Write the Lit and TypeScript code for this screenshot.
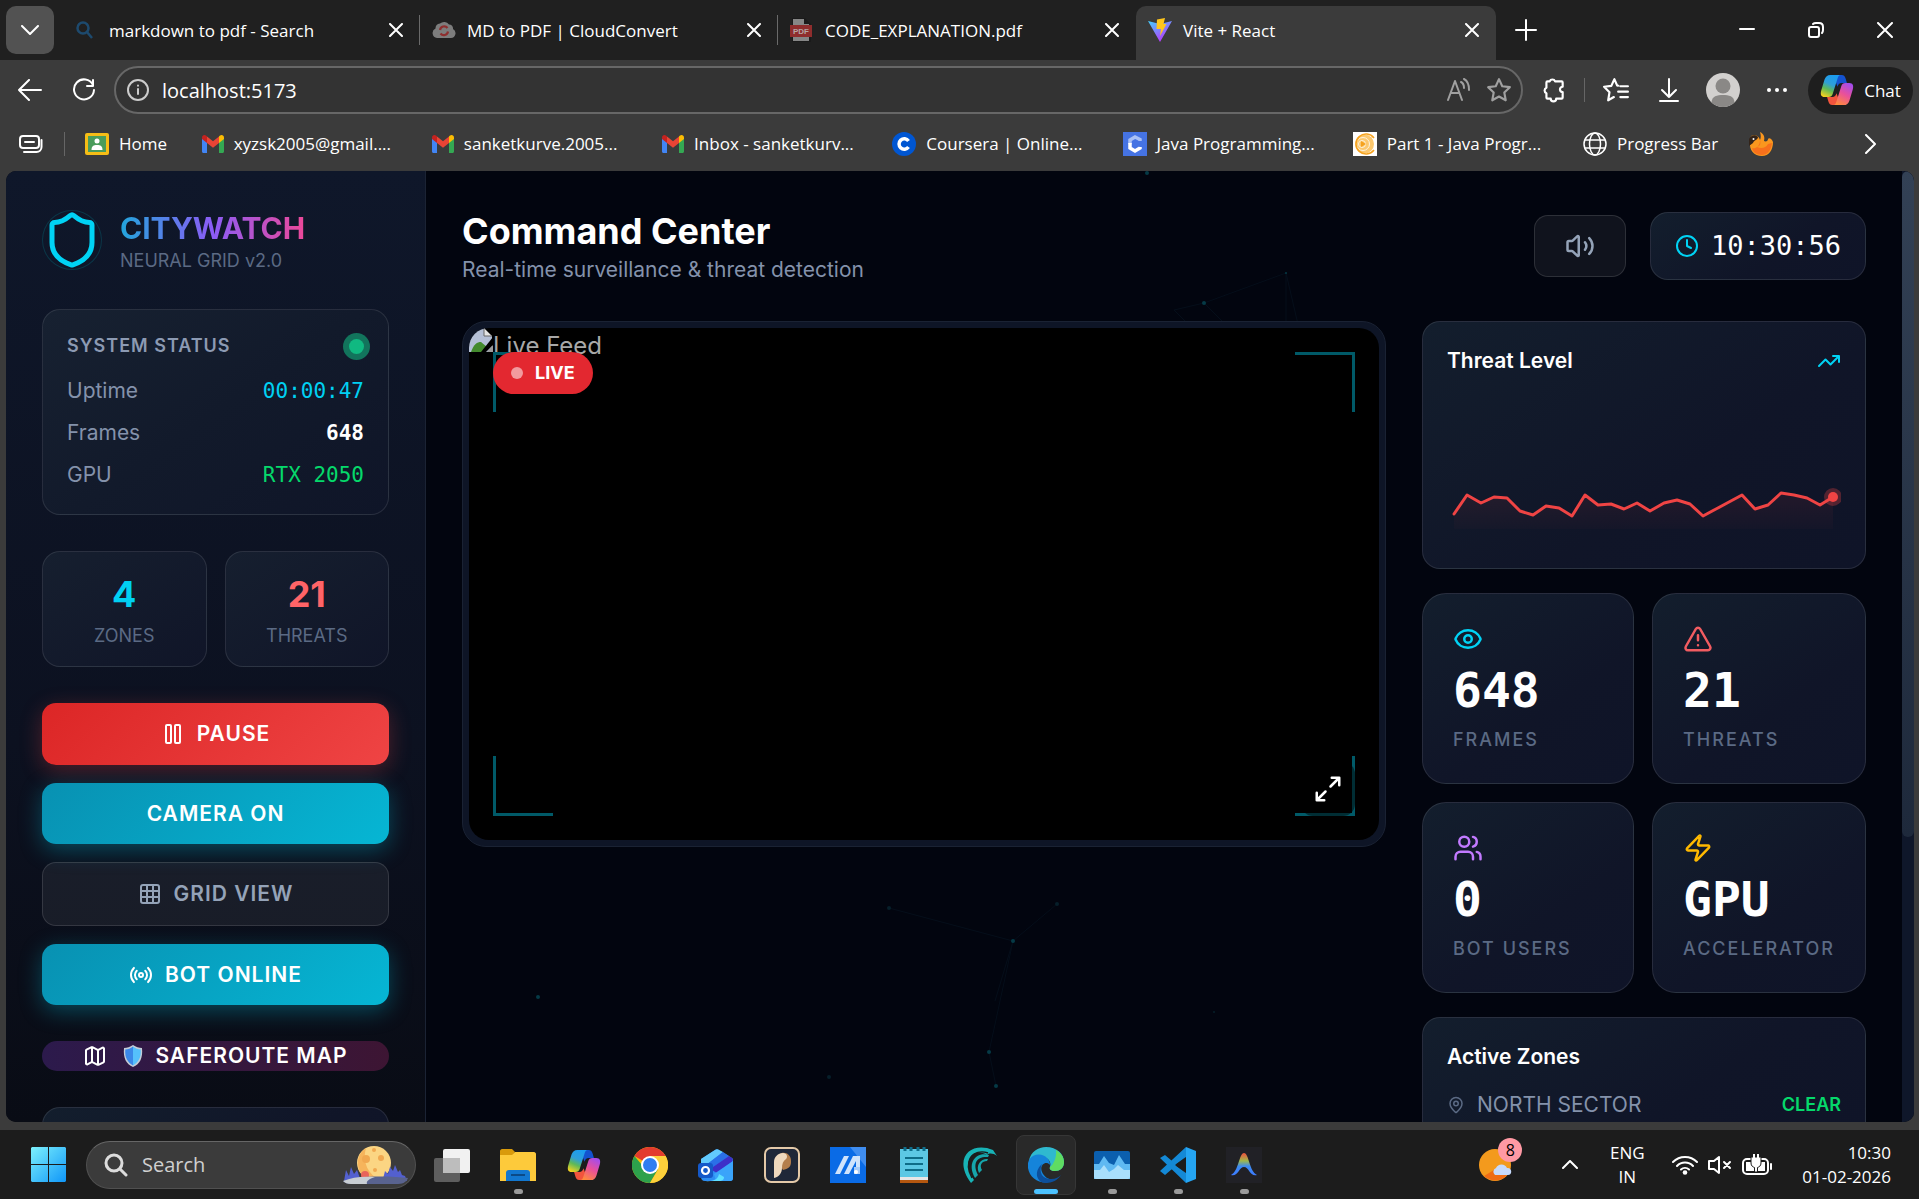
import { LitElement, html, css, svg } from "lit";
import { customElement } from "lit/decorators.js";

const copilotIcon = (size: number) => html`
    <svg width=${size} height=${size} viewBox="0 0 36 36" aria-hidden="true">
        <defs>
            <linearGradient id="copA" x1="0.6" y1="0" x2="0.2" y2="1">
                <stop offset="0" stop-color="#1b9cf0"></stop>
                <stop offset="0.4" stop-color="#2f9fd8"></stop>
                <stop offset="0.65" stop-color="#5fb957"></stop>
                <stop offset="1" stop-color="#fbd31e"></stop>
            </linearGradient>
            <linearGradient id="copB" x1="0.8" y1="0" x2="0.3" y2="1">
                <stop offset="0" stop-color="#a04cf0"></stop>
                <stop offset="0.5" stop-color="#e9509a"></stop>
                <stop offset="1" stop-color="#ff8a3d"></stop>
            </linearGradient>
        </defs>
        <path d="M14 2h9c2.500 0 3.500 1.500 4.200 4l1.300 4.500h-5.500c-2.500 0-3.800 1.500-4.500 4z" fill="#1452cf"></path>
        <path d="M22 34h-9c-2.500 0-3.500-1.500-4.200-4l-1.300-4.500h5.500c2.500 0 3.800-1.500 4.500-4z" fill="#f2543d"></path>
        <path d="M11 2h11c-2 0-2.800 1.500-3.500 4l-5 16c-.8 2.500-2 3.500-4.500 3.500h-4c-4 0-4.800-3-3.700-7l3.500-11.500c1-3.300 3-5 6.200-5z" fill="url(#copA)"></path>
        <path d="M25 34h-11c2 0 2.800-1.500 3.500-4l5-16c.8-2.500 2-3.500 4.500-3.500h4c4 0 4.800 3 3.700 7l-3.500 11.500c-1 3.300-3 5-6.200 5z" fill="url(#copB)"></path>
    </svg>
`;

const gmailIcon = html`
    <svg width="22" height="18" viewBox="0 0 22 18" aria-hidden="true">
        <path d="M0 3v13.500c0 .8.600 1.500 1.500 1.500H5V7z" fill="#4285f4"></path>
        <path d="M22 3v13.500c0 .8-.6 1.500-1.500 1.500H17V7z" fill="#34a853"></path>
        <path d="M17 1.500V8l5-4V2.500C22 .2 19.400-.8 17.700.8z" fill="#fbbc04"></path>
        <path d="M5 8V1.500l6 4.700 6-4.700V8l-6 4.700z" fill="#ea4335"></path>
        <path d="M0 2.500V4l5 4V1.500L4.300.8C2.600-.8 0 .2 0 2.500z" fill="#c5221f"></path>
    </svg>
`;

@customElement("browser-bar")
class BrowserBar extends LitElement {
    static styles = css`
        :host {
            display: block;
            flex: none;
            background: #3b3b3b;
            color: #fff;
            font-family: "Open Sans", "Noto Sans", sans-serif;
            font-size: 17px;
        }

        button {
            display: flex;
            align-items: center;
            justify-content: center;
            padding: 0;
            border: 0;
            background: none;
            color: inherit;
            font: inherit;
            flex: none;
        }

        svg {
            flex: none;
        }

        .line {
            fill: none;
            stroke: currentColor;
            stroke-width: 2;
            stroke-linecap: round;
            stroke-linejoin: round;
        }

        .tabs {
            display: flex;
            height: 60px;
            background: #202020;
        }

        .list {
            width: 48px;
            height: 48px;
            margin: 6px 8px 0 6px;
            border-radius: 10px;
            background: #525252;
        }

        .tab {
            display: flex;
            align-items: center;
            flex: 0 1 358px;
            height: 60px;
            box-sizing: border-box;
            padding: 0 12px;
        }

        .tab.line-after {
            background: linear-gradient(#6a6a6a, #6a6a6a) right 15px / 1px 30px no-repeat;
        }

        .tab.active {
            flex-basis: 360px;
            height: 54px;
            margin-top: 6px;
            padding: 0 12px 6px;
            border-radius: 10px 10px 0 0;
            background: #3b3b3b;
        }

        .name {
            flex: 1;
            justify-content: flex-start;
            gap: 11px;
            min-width: 0;
            white-space: nowrap;
        }

        .name svg {
            width: 24px;
            height: 24px;
        }

        .close {
            width: 24px;
            height: 24px;
        }

        .plus {
            width: 60px;
            height: 60px;
        }

        .window {
            display: flex;
            margin-left: auto;
        }

        .window button {
            width: 69px;
            height: 60px;
        }

        .tools {
            display: flex;
            align-items: center;
            height: 60px;
            padding-right: 6px;
        }

        .tools > button {
            width: 54px;
            height: 48px;
        }

        .tools > .first {
            margin-left: 3px;
        }

        .url {
            display: flex;
            align-items: center;
            flex: 1;
            height: 48px;
            box-sizing: border-box;
            margin-left: 3px;
            padding: 0 2px 0 11px;
            border: 2px solid #676767;
            border-radius: 24px;
            background: #333;
        }

        .url input {
            flex: 1;
            min-width: 0;
            margin-left: 13px;
            padding: 0;
            border: 0;
            outline: 0;
            background: none;
            color: #fff;
            font: inherit;
            font-size: 20px;
        }

        .url button {
            width: 41px;
            color: #a0a0a0;
        }

        .split {
            width: 1px;
            height: 24px;
            background: #666;
        }

        .tools .ext {
            width: 61px;
        }

        .tools .fav {
            width: 57px;
            padding-left: 4px;
        }

        .tools .pill {
            gap: 10px;
            width: 105px;
            height: 47px;
            margin-left: 4px;
            border-radius: 24px;
            background: #1e1e1e;
        }

        .marks {
            display: flex;
            align-items: center;
            box-sizing: border-box;
            height: 51px;
            padding-bottom: 4px;
        }

        .marks .all {
            width: 61px;
            height: 42px;
            margin-right: 3px;
        }

        .mark {
            display: flex;
            align-items: center;
            gap: 10px;
            flex: 0 1 211px;
            margin-left: 20px;
            color: #fff;
            text-decoration: none;
            white-space: nowrap;
        }

        .mark.short {
            flex-basis: 97px;
        }

        .mark.mid {
            flex-basis: 147px;
        }

        .more {
            width: 48px;
            height: 42px;
            margin: 0 25px 0 auto;
        }
    `;

    private tab(icon: unknown, text: string, cls: string) {
        return html`
            <div class="tab ${cls}">
                <button class="name">${icon}<span>${text}</span></button>
                <button class="close" aria-label="Close tab">
                    <svg width="14" height="14" viewBox="0 0 14 14"><path class="line" d="M1 1l12 12M13 1L1 13"></path></svg>
                </button>
            </div>
        `;
    }

    private mark(icon: unknown, text: string, cls = "") {
        return html`<a class="mark ${cls}" href="#" aria-label=${text || "Bookmark"}>${icon}${text}</a>`;
    }

    render() {
        const search = html`<svg viewBox="0 0 24 24"><g fill="none" stroke="#1d4a6e" stroke-width="2.500"><circle cx="9" cy="10" r="5.500"></circle><path d="M13 14l5 6"></path></g></svg>`;
        const cloud = html`
            <svg viewBox="0 0 24 24">
                <path d="M5 20a5 5 0 0 1-1.500-9.500A5 5 0 0 1 8 5.500a6 6 0 0 1 9 1 4 4 0 0 1 4 4.500A4.800 4.800 0 0 1 19 20z" fill="#7d7d7d"></path>
                <path d="M8 12a4.200 4.200 0 0 1 7.500-2M16 13.500a4.200 4.200 0 0 1-7.500 2" fill="none" stroke="#8e2f2f" stroke-width="2.200"></path>
            </svg>`;
        const pdf = html`
            <svg viewBox="0 0 24 24">
                <path d="M2 0h13l6 6v18H2z" fill="#1a1a1a"></path>
                <path d="M3 1h11v5h5v17H3z" fill="#868686"></path>
                <rect x="0" y="7" width="22" height="12" fill="#8f2d2d"></rect>
                <text x="11" y="16" text-anchor="middle" font-size="8" font-weight="700" font-family="Liberation Sans, sans-serif" fill="#b5a5a5">PDF</text>
            </svg>`;
        const vite = html`
            <svg viewBox="0 0 24 24">
                <defs><linearGradient id="vt" x1="0" y1="0" x2="0.600" y2="1"><stop offset="0" stop-color="#41d1ff"></stop><stop offset="1" stop-color="#bd34fe"></stop></linearGradient></defs>
                <path d="M0 3l12 3 12-3-12 21z" fill="url(#vt)"></path>
                <path d="M9 1.500l8-1.500-1.500 6h3L12 18l1-7H8.500z" fill="#ffc61c"></path>
            </svg>`;
        const home = html`
            <svg width="24" height="22" viewBox="0 0 24 22">
                <rect width="24" height="22" rx="2" fill="#f6bd16"></rect>
                <rect x="3" y="3" width="18" height="16" fill="#4a9c5b"></rect>
                <circle cx="12" cy="8" r="2.500" fill="#fff"></circle>
                <path d="M6.500 17c0-4 2-5 5.500-5s5.500 1 5.500 5z" fill="#fff"></path>
            </svg>`;
        const coursera = html`<svg width="24" height="24" viewBox="0 0 24 24"><circle cx="12" cy="12" r="12" fill="#0056d2"></circle><path d="M16.500 9a5.200 5.200 0 1 0 0 6" fill="none" stroke="#fff" stroke-width="3.500"></path></svg>`;
        const java = html`<svg width="24" height="24" viewBox="0 0 24 24"><rect width="24" height="24" fill="#4573e3"></rect><path d="M17 9V7.500L12 5 7 8v4" fill="none" stroke="#a9c0f5" stroke-width="3.500"></path><path d="M7 11v5l5 3 5-3v-1" fill="none" stroke="#fff" stroke-width="3.500"></path></svg>`;
        const part = html`
            <svg width="24" height="24" viewBox="0 0 24 24">
                <rect width="24" height="24" fill="#fff"></rect>
                <circle cx="11.500" cy="12" r="9.500" fill="#fcc86e"></circle>
                <g fill="none" stroke="#fff3dc"><circle cx="10" cy="12" r="6.500"></circle><circle cx="9" cy="12" r="3.500"></circle></g>
                <path d="M21 6a10 10 0 1 0 0 12" fill="none" stroke="#f6a21e" stroke-width="1.500"></path>
                <path d="M8 9l5 3-5 3z" fill="#f6a21e"></path>
            </svg>`;
        const globe = html`<svg width="24" height="24" viewBox="0 0 24 24" fill="none" stroke="#fff" stroke-width="1.500"><circle cx="12" cy="12" r="11"></circle><ellipse cx="12" cy="12" rx="5.500" ry="11"></ellipse><path d="M2 8h20M2 16h20"></path></svg>`;
        const flame = html`
            <svg width="24" height="24" viewBox="0 0 24 24">
                <path d="M2 4c4-2 8 0 9 4 1-2 1-5 0-8 4 2 5 5 4 9 2 1 4 0 4-2 1-2 4 0 5 3 0 8-4 14-11 14C5 24 0 18 1 10z" fill="#fa971e"></path>
                <path d="M11 8c1 4 0 6-3 7 4 2 9 1 11-3l4-1c-1 8-5 12-10 12-6 0-9-3-10-7 3 1 8-1 8-8z" fill="#f7701c"></path>
                <path d="M0 7c2-4 6-5 9-2 0 3-4 3-5 6l-4 3z" fill="#33241a"></path>
                <circle cx="4.500" cy="7" r="1" fill="#fff"></circle>
            </svg>`;

        return html`
            <div class="tabs">
                <button class="list" aria-label="Search tabs">
                    <svg width="18" height="10" viewBox="0 0 18 10"><path class="line" d="M1 1l8 8 8-8"></path></svg>
                </button>
                ${this.tab(search, "markdown to pdf - Search", "line-after")}
                ${this.tab(cloud, "MD to PDF | CloudConvert", "line-after")}
                ${this.tab(pdf, "CODE_EXPLANATION.pdf", "")}
                ${this.tab(vite, "Vite + React", "active")}
                <button class="plus" aria-label="New tab">
                    <svg width="22" height="22" viewBox="0 0 22 22"><path class="line" d="M11 1v20M1 11h20"></path></svg>
                </button>
                <div class="window">
                    <button aria-label="Minimize"><svg width="16" height="16" viewBox="0 0 16 16"><path class="line" d="M1 7h14"></path></svg></button>
                    <button aria-label="Restore"><svg width="16" height="16" viewBox="0 0 16 16"><g class="line"><rect x="1" y="5" width="10" height="10" rx="2"></rect><path d="M5 2c1-1 1-1 3-1h3c3 0 4 1 4 4v3c0 2 0 2-1 3"></path></g></svg></button>
                    <button aria-label="Close"><svg width="16" height="16" viewBox="0 0 16 16"><path class="line" d="M1 1l14 14M15 1L1 15"></path></svg></button>
                </div>
            </div>

            <div class="tools">
                <button class="first" aria-label="Back"><svg width="24" height="22" viewBox="0 0 24 22"><path class="line" d="M23 11H1M11 1L1 11l10 10"></path></svg></button>
                <button aria-label="Refresh"><svg width="24" height="24" viewBox="0 0 24 24"><path class="line" d="M21 7a10 10 0 1 0 1 5M21 2v6h-6"></path></svg></button>
                <div class="url">
                    <svg width="22" height="22" viewBox="0 0 22 22" fill="none" stroke="#ccc" stroke-width="2" stroke-linecap="round"><circle cx="11" cy="11" r="10"></circle><path d="M11 10v5M11 6.500v.2"></path></svg>
                    <input aria-label="Address" value="localhost:5173">
                    <button aria-label="Read aloud"><svg width="24" height="24" viewBox="0 0 24 24"><path class="line" d="M2 22L9 3l7 19M5 15h8M15 4c2 1 3 3 3 6M18 1c4 2 5 6 5 11"></path></svg></button>
                    <button aria-label="Favorite"><svg width="26" height="26" viewBox="0 0 24 24"><path class="line" d="M12 2l3 6.500 7 .9-5.100 5 1.300 7.100L12 18l-6.200 3.500 1.300-7.100L2 9.400l7-.9z"></path></svg></button>
                </div>
                <button class="ext" aria-label="Extensions"><svg width="26" height="26" viewBox="0 0 24 24"><path class="line" d="M8 4a2.700 2.700 0 0 1 5 0h6a1 1 0 0 1 1 1v4a2.500 2.500 0 1 0 0 5v5a1 1 0 0 1-1 1h-5a2.500 2.500 0 0 1-5 0H6a1 1 0 0 1-1-1v-4a2.700 2.700 0 0 1 0-5V5a1 1 0 0 1 1-1z"></path></svg></button>
                <div class="split"></div>
                <button class="fav" aria-label="Favorites"><svg width="26" height="26" viewBox="0 0 24 24"><path class="line" d="M14 8l-1-.3L10.500 2 7.700 8.200 1 9l5 5-1.200 7.500L10 18.500M16 8.500h7M14 13.500h9M16 18.500h7"></path></svg></button>
                <button aria-label="Downloads"><svg width="20" height="24" viewBox="0 0 20 24"><path class="line" d="M10 1v18M3 12l7 7 7-7M1 23h18"></path></svg></button>
                <button aria-label="Profile">
                    <svg width="34" height="34" viewBox="0 0 34 34"><circle cx="17" cy="17" r="17" fill="#d2d0ce"></circle><circle cx="17" cy="13" r="7.500" fill="#8a8886"></circle><path d="M5.500 29.500C6 23 11 22 17 22s11 1 11.500 7.500A17 17 0 0 1 5.500 29.500z" fill="#8a8886"></path></svg>
                </button>
                <button aria-label="Menu"><svg width="20" height="4" viewBox="0 0 20 4" fill="#fff"><circle cx="2" cy="2" r="2"></circle><circle cx="10" cy="2" r="2"></circle><circle cx="18" cy="2" r="2"></circle></svg></button>
                <button class="pill">${copilotIcon(34)}Chat</button>
            </div>

            <nav class="marks">
                <button class="all" aria-label="Tab groups"><svg width="24" height="18" viewBox="0 0 24 18"><g class="line"><rect x="1" y="1" width="19" height="12" rx="3"></rect><path d="M6 7h9M22.500 5v7a5 5 0 0 1-5 5H5"></path></g></svg></button>
                <div class="split"></div>
                ${this.mark(home, "Home", "short")}
                ${this.mark(gmailIcon, "xyzsk2005@gmail....")}
                ${this.mark(gmailIcon, "sanketkurve.2005...")}
                ${this.mark(gmailIcon, "Inbox - sanketkurv...")}
                ${this.mark(coursera, "Coursera | Online...")}
                ${this.mark(java, "Java Programming...")}
                ${this.mark(part, "Part 1 - Java Progr...")}
                ${this.mark(globe, "Progress Bar", "mid")}
                ${this.mark(flame, "", "short")}
                <button class="more" aria-label="More bookmarks"><svg width="11" height="20" viewBox="0 0 11 20"><path class="line" d="M1 1l9 9-9 9"></path></svg></button>
            </nav>
        `;
    }
}

// 24-unit outline icons of the dashboard
const shapes: Record<string, unknown> = {
    shield: svg`<path d="M20 13c0 5-3.500 7.500-7.660 8.950a1 1 0 0 1-.67-.01C7.500 20.500 4 18 4 13V6a1 1 0 0 1 1-1c2 0 4.500-1.200 6.240-2.720a1.170 1.170 0 0 1 1.520 0C14.510 3.810 17 5 19 5a1 1 0 0 1 1 1z"/>`,
    pause: svg`<rect x="14" y="3" width="5" height="18" rx="1"/><rect x="5" y="3" width="5" height="18" rx="1"/>`,
    grid: svg`<rect width="18" height="18" x="3" y="3" rx="2"/><path d="M3 9h18M3 15h18M9 3v18M15 3v18"/>`,
    radio: svg`<path d="M16.250 7.760a6 6 0 0 1 0 8.490M19.070 4.930a10 10 0 0 1 0 14.140M7.750 16.250a6 6 0 0 1 0-8.490M4.930 19.070a10 10 0 0 1 0-14.140"/><circle cx="12" cy="12" r="2"/>`,
    map: svg`<path d="M14.100 5.550a2 2 0 0 0 1.800 0l3.660-1.830A1 1 0 0 1 21 4.620v12.760a1 1 0 0 1-.55.9l-4.550 2.270a2 2 0 0 1-1.800 0l-4.200-2.100a2 2 0 0 0-1.800 0l-3.660 1.830A1 1 0 0 1 3 19.380V6.620a1 1 0 0 1 .55-.9l4.550-2.270a2 2 0 0 1 1.800 0zM15 5.760v15M9 3.240v15"/>`,
    volume: svg`<path d="M11 4.700a.7.700 0 0 0-1.200-.5L6.400 7.590A1.400 1.400 0 0 1 5.420 8H3a1 1 0 0 0-1 1v6a1 1 0 0 0 1 1h2.420a1.400 1.400 0 0 1 .97.41l3.390 3.380a.7.700 0 0 0 1.200-.5zM16 9a5 5 0 0 1 0 6M19.360 18.360a9 9 0 0 0 0-12.730"/>`,
    clock: svg`<circle cx="12" cy="12" r="10"/><path d="M12 6v6l4 2"/>`,
    trend: svg`<path d="M16 7h6v6M22 7l-8.500 8.500-5-5L2 17"/>`,
    eye: svg`<path d="M2.060 12.350a1 1 0 0 1 0-.7 10.750 10.750 0 0 1 19.880 0 1 1 0 0 1 0 .7 10.750 10.750 0 0 1-19.880 0"/><circle cx="12" cy="12" r="3"/>`,
    alert: svg`<path d="M21.730 18l-8-14a2 2 0 0 0-3.480 0l-8 14A2 2 0 0 0 4 21h16a2 2 0 0 0 1.730-3M12 9v4M12 17h.01"/>`,
    users: svg`<path d="M16 21v-2a4 4 0 0 0-4-4H6a4 4 0 0 0-4 4v2M16 3.130a4 4 0 0 1 0 7.740M22 21v-2a4 4 0 0 0-3-3.870"/><circle cx="9" cy="7" r="4"/>`,
    zap: svg`<path d="M4 14a1 1 0 0 1-.78-1.630l9.900-10.200a.5.500 0 0 1 .86.460l-1.920 6.020A1 1 0 0 0 13 10h7a1 1 0 0 1 .78 1.630l-9.900 10.200a.5.500 0 0 1-.86-.46l1.920-6.020A1 1 0 0 0 11 14z"/>`,
    pin: svg`<path d="M20 10c0 5-5.540 10.190-7.400 11.800a1 1 0 0 1-1.200 0C9.540 20.190 4 15 4 10a8 8 0 0 1 16 0"/><circle cx="12" cy="10" r="3"/>`,
    expand: svg`<path d="M15 3h6v6M9 21H3v-6M21 3l-7 7M3 21l7-7"/>`,
};

const icon = (name: string, size: number, color = "currentColor") => html`
    <svg width=${size} height=${size} viewBox="0 0 24 24" fill="none" stroke=${color} stroke-width="2"
        stroke-linecap="round" stroke-linejoin="round" aria-hidden="true">${shapes[name]}</svg>
`;

const threatPoints = [
    [7, 120], [20, 101], [34, 109], [47, 103], [60, 104], [73, 117], [86, 121], [99, 112], [112, 114], [125, 122],
    [138, 101], [151, 111], [164, 110], [177, 115], [190, 109], [203, 117], [217, 109], [230, 106], [243, 110],
    [256, 122], [269, 115], [282, 108], [295, 101], [308, 115], [321, 111], [334, 99], [347, 101], [360, 104],
    [373, 111], [386, 103],
];

@customElement("city-watch")
class CityWatch extends LitElement {
    static styles = css`
        :host {
            display: flex;
            position: relative;
            flex: 1;
            min-height: 0;
            margin: 0 5px 0 6px;
            overflow: hidden;
            border-radius: 10px;
            background: #02050f;
            color: #fff;
            font-family: Inter, "Liberation Sans", sans-serif;
            font-size: 21px;
            line-height: 30px;
        }

        h1, h2, p, dl, dd {
            margin: 0;
        }

        svg {
            display: block;
            flex: none;
        }

        .mono {
            font-family: "DejaVu Sans Mono", "Liberation Mono", monospace;
        }

        .card {
            box-sizing: border-box;
            border: 1px solid rgba(255, 255, 255, 0.1);
            border-radius: 18px;
            background: linear-gradient(145deg, #131e2d, #101528 60%, #0f1428);
            padding: 24px;
        }

        aside {
            display: flex;
            flex-direction: column;
            gap: 36px;
            flex: none;
            width: 420px;
            box-sizing: border-box;
            padding: 36px;
            border-right: 1px solid #1b2334;
            background: linear-gradient(#0f172a, #0c1120 60%, #090c15);
            z-index: 1;
        }

        aside > * {
            flex: none;
        }

        .brand {
            display: flex;
            align-items: center;
            gap: 18px;
        }

        .logo {
            border-radius: 50%;
            box-shadow: inset 0 0 0 1px #0b3647;
        }

        .brand h2 {
            font-size: 30px;
            line-height: 42px;
            font-weight: 700;
            background: linear-gradient(90deg, #22a5dc, #8b5cf6 50%, #ec4899);
            -webkit-background-clip: text;
            background-clip: text;
            color: transparent;
        }

        .brand p {
            color: #5b6a84;
            font-size: 18px;
            line-height: 24px;
        }

        .status {
            background: linear-gradient(145deg, #172131, #121a2b 50%, #0f1528);
        }

        .status header {
            display: flex;
            justify-content: space-between;
            align-items: center;
            height: 24px;
            margin-bottom: 18px;
            color: #8c9ab3;
            font-size: 18px;
            font-weight: 600;
            letter-spacing: 1px;
        }

        .dot {
            width: 15px;
            height: 15px;
            border-radius: 50%;
            background: #10b981;
            box-shadow: 0 0 0 6px #12745c;
        }

        .status dl {
            display: grid;
            gap: 12px;
        }

        .status dl div {
            display: flex;
            justify-content: space-between;
            color: #8492ab;
        }

        .cyan {
            color: #00d0f2;
        }

        .green {
            color: #05d96b;
        }

        .white {
            color: #fff;
            font-weight: 700;
        }

        .red {
            color: #ff6467;
        }

        .pair {
            display: grid;
            grid-template-columns: 1fr 1fr;
            gap: 18px;
        }

        .count {
            padding: 18px;
            background: linear-gradient(145deg, #161f2f, #101528);
            text-align: center;
            color: #5b6a84;
            font-size: 18px;
            line-height: 24px;
        }

        .count b {
            display: block;
            margin-bottom: 6px;
            font-size: 36px;
            line-height: 48px;
        }

        .actions {
            display: grid;
            gap: 18px;
        }

        button {
            display: flex;
            align-items: center;
            justify-content: center;
            gap: 12px;
            padding: 18px;
            border: 0;
            border-radius: 14px;
            color: #fff;
            font: 600 21px/26px Inter, "Liberation Sans", sans-serif;
            letter-spacing: 1px;
            cursor: pointer;
        }

        .pause {
            background: linear-gradient(135deg, #dc2626, #ef4444);
            box-shadow: 0 6px 22px rgba(239, 68, 68, 0.3);
        }

        .teal {
            background: linear-gradient(135deg, #0891b2, #06b6d4);
            box-shadow: 0 6px 22px rgba(6, 182, 212, 0.35);
            line-height: 25px;
        }

        .ghost {
            border: 1px solid rgba(255, 255, 255, 0.12);
            background: rgba(255, 255, 255, 0.06);
            color: #94a3b8;
        }

        .route {
            height: 30px;
            padding: 0;
            border-radius: 15px;
            background: linear-gradient(90deg, #2c1a4c, #3d1533);
        }

        .route svg:first-child {
            margin-right: 4px;
        }

        .more {
            min-height: 120px;
        }

        main {
            flex: 1;
            min-width: 0;
            padding: 36px;
            z-index: 1;
        }

        .top {
            display: flex;
            align-items: center;
            gap: 24px;
            margin-bottom: 36px;
        }

        .top div:first-child {
            flex: 1;
        }

        h1 {
            font-size: 36px;
            line-height: 48px;
            font-weight: 700;
        }

        .top p {
            color: #8492ab;
        }

        .sound {
            width: 92px;
            height: 62px;
        }

        .time {
            display: flex;
            align-items: center;
            gap: 12px;
            height: 68px;
            font-size: 27px;
        }

        .content {
            display: grid;
            grid-template-columns: 1fr 444px;
            gap: 36px;
            align-items: start;
        }

        .feed {
            border: 1px solid #1a2233;
            border-radius: 24px;
            background: #0e1526;
            padding: 6px;
        }

        .video {
            position: relative;
            aspect-ratio: 16 / 9;
            overflow: hidden;
            border-radius: 20px;
            background: #000;
        }

        .missing {
            display: flex;
            color: #a8a8a8;
            font-size: 24px;
            line-height: 36px;
        }

        .corner {
            position: absolute;
            width: 57px;
            height: 57px;
            border: 0 solid #005a68;
        }

        .tl { top: 24px; left: 24px; border-width: 3px 0 0 3px; }
        .tr { top: 24px; right: 24px; border-width: 3px 3px 0 0; }
        .bl { bottom: 24px; left: 24px; border-width: 0 0 3px 3px; }
        .br { bottom: 24px; right: 24px; border-width: 0 3px 3px 0; }

        .live {
            position: absolute;
            top: 24px;
            left: 24px;
            display: flex;
            align-items: center;
            gap: 12px;
            padding: 0 18px;
            height: 42px;
            border-radius: 21px;
            background: #e32830;
            font-size: 18px;
            font-weight: 700;
        }

        .live::before {
            content: "";
            width: 12px;
            height: 12px;
            border-radius: 50%;
            background: #f29a9e;
        }

        .full {
            position: absolute;
            right: 24px;
            bottom: 24px;
            padding: 12px;
            border-radius: 12px;
            background: rgba(0, 0, 0, 0.5);
        }

        .side {
            display: grid;
            gap: 24px;
        }

        .head {
            display: flex;
            align-items: center;
            justify-content: space-between;
            margin-bottom: 18px;
        }

        .side h2 {
            font-size: 21px;
            line-height: 30px;
            font-weight: 600;
        }

        .chart {
            width: 100%;
            height: auto;
        }

        .stat {
            padding: 30px;
            border-radius: 24px;
            color: #5b6a84;
            font-size: 18px;
            font-weight: 500;
            line-height: 27px;
            letter-spacing: 2px;
        }

        .stat b {
            display: block;
            margin: 12px 0;
            color: #fff;
            font-size: 48px;
            line-height: 48px;
            letter-spacing: 0;
        }

        .zone {
            display: flex;
            align-items: center;
            color: #8492ab;
        }

        .zone span {
            flex: 1;
            margin-left: 12px;
        }

        .zone strong {
            font-size: 18px;
            font-weight: 600;
        }

        .scroll {
            flex: none;
            width: 12px;
            background: #0f172a;
            z-index: 1;
        }

        .thumb {
            height: 70%;
            border-radius: 6px;
            background: linear-gradient(#334155, #1e293b);
        }

        .net {
            position: absolute;
            inset: 0;
            width: 100%;
            height: 100%;
        }
    `;

    private stat(name: string, color: string, value: string, label: string) {
        return html`<div class="card stat">${icon(name, 30, color)}<b class="mono">${value}</b>${label}</div>`;
    }

    render() {
        const line = threatPoints.map((p) => p.join(",")).join(" ");
        return html`
            <svg class="net" aria-hidden="true">
                <g stroke="#050e1a" fill="none">
                    <path d="M883 737l124 33 44-37M1007 770l-24 111 7 34M1007 770l-18 60"></path>
                    <path d="M1168 139l30-7 82-30v60M1280 102l14 60M1198 132l30 30M1168 139l20 20"></path>
                </g>
                <g fill="#053a46">
                    <circle cx="1141" cy="2" r="2"></circle><circle cx="1198" cy="132" r="2"></circle>
                    <circle cx="1280" cy="102" r="1"></circle><circle cx="532" cy="826" r="2"></circle>
                    <circle cx="1007" cy="770" r="2"></circle><circle cx="983" cy="881" r="2"></circle>
                    <circle cx="990" cy="915" r="2"></circle>
                </g>
                <g fill="#061f2a">
                    <circle cx="823" cy="906" r="2"></circle><circle cx="883" cy="737" r="2"></circle>
                    <circle cx="1051" cy="733" r="2"></circle><circle cx="1208" cy="841" r="1"></circle>
                </g>
            </svg>

            <aside>
                <div class="brand">
                    <div class="logo">${icon("shield", 60, "#00d3f5")}</div>
                    <div>
                        <h2>CITYWATCH</h2>
                        <p>NEURAL GRID v2.0</p>
                    </div>
                </div>

                <section class="card status">
                    <header>SYSTEM STATUS<span class="dot"></span></header>
                    <dl>
                        <div><dt>Uptime</dt><dd class="mono cyan">00:00:47</dd></div>
                        <div><dt>Frames</dt><dd class="mono white">648</dd></div>
                        <div><dt>GPU</dt><dd class="mono green">RTX 2050</dd></div>
                    </dl>
                </section>

                <div class="pair">
                    <div class="card count"><b class="cyan">4</b>ZONES</div>
                    <div class="card count"><b class="red">21</b>THREATS</div>
                </div>

                <div class="actions">
                    <button class="pause">${icon("pause", 24)}PAUSE</button>
                    <button class="teal">CAMERA ON</button>
                    <button class="ghost">${icon("grid", 24)}GRID VIEW</button>
                    <button class="teal">${icon("radio", 24)}BOT ONLINE</button>
                </div>

                <button class="route">
                    ${icon("map", 24)}
                    <svg width="20" height="24" viewBox="2 0 20 24">
                        <path d="M12 1c3 2 6 3 9 3 1 10-2 16-9 19C5 20 2 14 3 4c3 0 6-1 9-3z" fill="#c3cbd6"></path>
                        <path d="M12 2.500v19C7 18.500 3.500 14 4.300 5.500c2.700 0 5.400-1.200 7.700-3z" fill="#3b88e8"></path>
                        <path d="M12 2.500v19c5-3 8.500-7.500 7.700-16-2.700 0-5.400-1.200-7.700-3z" fill="#55c0fb"></path>
                    </svg>
                    SAFEROUTE MAP
                </button>

                <div class="card more"></div>
            </aside>

            <main>
                <div class="top">
                    <div>
                        <h1>Command Center</h1>
                        <p>Real-time surveillance &amp; threat detection</p>
                    </div>
                    <button class="ghost sound" aria-label="Sound">${icon("volume", 30)}</button>
                    <div class="card time">${icon("clock", 24, "#00d3f5")}<span class="mono">10:30:56</span></div>
                </div>

                <div class="content">
                    <div class="feed">
                        <div class="video">
                            <div class="missing">
                                <svg width="24" height="24" viewBox="0 0 24 24">
                                    <path d="M0 0h15l8 8v16H0z" fill="#b4bfd6"></path>
                                    <path d="M2 24c3-8 6-10 10-10l6 5-5 5z" fill="#438a2d"></path>
                                    <path d="M15 0v8h8z" fill="#e4e4e4" stroke="#666"></path>
                                    <path d="M24 9L12 24h5l7-7z" fill="#000"></path>
                                    <path d="M24 17l-6 7h6z" fill="#9b9b9b"></path>
                                </svg>Live Feed
                            </div>
                            <div class="corner tl"></div>
                            <div class="corner tr"></div>
                            <div class="corner bl"></div>
                            <div class="corner br"></div>
                            <div class="live">LIVE</div>
                            <button class="full" aria-label="Full screen">${icon("expand", 30)}</button>
                        </div>
                    </div>

                    <div class="side">
                        <section class="card">
                            <div class="head"><h2>Threat Level</h2>${icon("trend", 24, "#00d3f5")}</div>
                            <svg class="chart" viewBox="0 0 394 150">
                                <defs>
                                    <linearGradient id="area" x1="0" y1="0" x2="0" y2="1">
                                        <stop offset="0" stop-color="#ef4444" stop-opacity="0.090"></stop>
                                        <stop offset="1" stop-color="#ef4444" stop-opacity="0.020"></stop>
                                    </linearGradient>
                                </defs>
                                <polygon points="7,135 ${line} 386,135" fill="url(#area)"></polygon>
                                <polyline points=${line} fill="none" stroke="#ef4444" stroke-width="3" stroke-linejoin="round" stroke-linecap="round"></polyline>
                                <circle cx="386" cy="103" r="9" fill="#ef4444" fill-opacity="0.300"></circle>
                                <circle cx="386" cy="103" r="5" fill="#ef4444"></circle>
                            </svg>
                        </section>

                        <div class="pair">
                            ${this.stat("eye", "#00d3f5", "648", "FRAMES")}
                            ${this.stat("alert", "#f25c61", "21", "THREATS")}
                            ${this.stat("users", "#c27aff", "0", "BOT USERS")}
                            ${this.stat("zap", "#ffb900", "GPU", "ACCELERATOR")}
                        </div>

                        <section class="card">
                            <div class="head"><h2>Active Zones</h2></div>
                            <div class="zone">${icon("pin", 18, "#5b6a84")}<span>NORTH SECTOR</span><strong class="green">CLEAR</strong></div>
                        </section>
                    </div>
                </div>
            </main>

            <div class="scroll"><div class="thumb"></div></div>
        `;
    }
}

const apps = [
    { name: "Task view", art: svg`<rect x="0" y="11" width="26" height="24" rx="2" fill="#5e5e5e"/><rect x="9" y="2" width="27" height="24" rx="2" fill="#f1f1f1"/><path d="M9 11h17v15H9z" fill="#bdbdbd"/>` },
    { name: "File Explorer", open: true, art: svg`<path d="M0 4c0-1 1-2 2-2h10l3 3-3 4H0z" fill="#d99a0b"/><path d="M0 8h12l3-3h19c1 0 2 1 2 2v27H0z" fill="#fdca3b"/><path d="M6 34v-8a3 3 0 0 1 3-3h18a3 3 0 0 1 3 3v8z" fill="#1277cf"/><path d="M11 28h14" stroke="#0b4a86" stroke-width="2"/>` },
    { name: "Copilot", art: null },
    { name: "Chrome", art: svg`<circle cx="18" cy="18" r="18" fill="#fbbc05"/><path d="M18 18L2.400 9a18 18 0 0 1 31.200 0z" fill="#e33b2e"/><path d="M18 18h-8L2.400 9A18 18 0 0 0 18 36l8-14z" fill="#2da14c"/><path d="M18 9h15.600A18 18 0 0 1 18 36l8-13z" fill="#fdd03b"/><circle cx="18" cy="18" r="9" fill="#fff"/><circle cx="18" cy="18" r="7" fill="#2f7df0"/>` },
    { name: "Outlook", art: svg`<path d="M3 12L17 3c1-1 3-1 4 0l13 8c1 1 1 1 1 3v17a3 3 0 0 1-3 3H7c-3 0-4-2-4-4z" fill="#2d8df2"/><path d="M3 12L17 3c1-1 3-1 4 0l4 2L8 18l-5-2z" fill="#62cbfd"/><path d="M25 5l6 4-19 13-4-4z" fill="#2a70e8"/><path d="M31 9l3 2c1 1 1 3 0 4L19 26l-7-4z" fill="#3d2fc8"/><path d="M35 14v17a3 3 0 0 1-3 3H18l-2-7z" fill="#3aa4fa"/><path d="M6 34c12 1 14-3 15-7l5 3c0 3-2 4-5 4z" fill="#5ee0ff"/><rect x="0" y="16" width="15" height="15" rx="3" fill="#1559c9"/><circle cx="7.500" cy="23.500" r="3.500" fill="none" stroke="#fff" stroke-width="2.200"/>` },
    { name: "Pages", art: svg`<rect x="1" y="1" width="34" height="34" rx="6" fill="#1f2738" stroke="#e4c9a8" stroke-width="2"/><path d="M13 14c0-12 15-10 14 1 0 5-3 7-8 8z" fill="#b47e4c"/><path d="M10 31V15c0-5 4-9 9-9 4 0 5 4 3 6-3 2-4 5-4 9 0 5-3 9-8 10z" fill="#efd8bd"/>` },
    { name: "MyASUS", art: svg`<rect width="36" height="36" fill="#0a6be6"/><path d="M20 0h16v20z" fill="#3f8df0"/><path d="M5 27L14 9h5l-9 18zM14 27l9-18h7v11h-4v-6l-7 13z" fill="#cfe3fc"/><path d="M24 20h6v7h-6z" fill="#a9ccf8"/><circle cx="26" cy="25" r="2" fill="#fff"/>` },
    { name: "Notepad", art: svg`<path d="M4 2h28v28H4z" fill="#5cc8e4"/><path d="M9 0v4M15 0v4M22 0v4M28 0v4" stroke="#0f6f8c" stroke-width="3"/><path d="M9 11h18M9 17h18M9 23h18" stroke="#0e6d88" stroke-width="2"/><path d="M4 30h28v3H4z" fill="#e6e6e6"/><path d="M4 33h28v3H4z" fill="#b5570f"/>` },
    { name: "Browser", art: svg`<path d="M9 36C-10 10 10-6 31 3l4 6c-4-3-8-3-10-1C12-1-2 13 12 33z" fill="#18b3b6"/><path d="M13 31C4 15 15 4 27 8l-1 2C15 9 10 16 16 28zM17 26c-4-9 3-15 9-14l-1 2c-5 0-8 4-5 9z" fill="#16a5ab"/><path d="M10 31C1 15 11 1 26 6" fill="none" stroke="#1c1c1c" stroke-width="1.500"/>` },
    { name: "Edge", active: true, art: svg`<path d="M1 13C3 5 10 0 18 0c11 0 18 7 18 15 0 6-4 9-9 9-4 0-6-2-5-4 2-6-3-10-9-10-5 0-9 1-12 3z" fill="#2fb9cf"/><path d="M28 3c5 3 8 7 8 12 0 6-4 9-9 9-4 0-6-2-5-4 3-2 7-9 6-17z" fill="#5fdc62"/><path d="M1 13c4-7 14-7 18-2 2 2 3 4 3 7-4-5-11 0-8 7 2 5 7 8 13 8C14 40-2 31 0 16z" fill="#1584da"/><path d="M14 17c-4 9 1 15 9 15 5 0 8-2 10-4-3 5-9 8-15 8C9 36 5 25 14 17z" fill="#0d4f9b"/>` },
    { name: "Task Manager", open: true, art: svg`<rect y="4" width="36" height="28" rx="2" fill="#0b5fae"/><path d="M0 17h5l5-8 5 7 5 2 5-10 6 9h5v15H0z" fill="#5fb9f2"/><path d="M0 23h6l4-5 5 7 5-3 4-4 6 5h6v7a2 2 0 0 1-2 2H2a2 2 0 0 1-2-2z" fill="#a9dffc"/>` },
    { name: "VS Code", open: true, art: svg`<path d="M26 10v16L15 18zM5 8L0 11l26 25V26zM26 0L0 24l5 4 21-18z" fill="#1489d6"/><path d="M26 10v16L15 18z" fill="#1c1c1c"/><path d="M26 0l10 4v28l-10 4z" fill="#25a5f2"/>` },
    { name: "Antigravity", open: true, art: svg`<defs><linearGradient id="ag" x1="0" y1="0" x2="0" y2="1"><stop offset="0" stop-color="#f0503c"/><stop offset="0.350" stop-color="#a0b84a"/><stop offset="0.600" stop-color="#3d8bf0"/><stop offset="1" stop-color="#3d7bff"/></linearGradient></defs><rect width="36" height="36" fill="#212126"/><path d="M5 28c8-4 8-22 13-22s5 18 13 22c-7 2-8-8-13-8s-6 10-13 8z" fill="url(#ag)"/>` },
];

@customElement("task-bar")
class TaskBar extends LitElement {
    static styles = css`
        :host {
            display: flex;
            align-items: center;
            flex: none;
            height: 69px;
            margin-top: 8px;
            box-sizing: border-box;
            padding: 0 20px;
            background: #1c1c1c;
            color: #fff;
            font: 17px/24px "Open Sans", "Noto Sans", sans-serif;
        }

        button {
            display: flex;
            align-items: center;
            justify-content: center;
            position: relative;
            padding: 0;
            border: 0;
            background: none;
            color: inherit;
            font: inherit;
            flex: none;
        }

        svg {
            flex: none;
        }

        .line {
            fill: none;
            stroke: currentColor;
            stroke-width: 2;
            stroke-linecap: round;
            stroke-linejoin: round;
        }

        .start {
            width: 57px;
            height: 60px;
        }

        .search {
            display: flex;
            align-items: center;
            gap: 14px;
            width: 330px;
            height: 48px;
            box-sizing: border-box;
            margin: 0 3px 0 9px;
            padding: 0 6px 0 17px;
            border: 1px solid #505050;
            border-top-color: #666;
            border-radius: 24px;
            background: #3b3b3b;
        }

        .search input {
            flex: 1;
            min-width: 0;
            padding: 0;
            border: 0;
            outline: 0;
            background: none;
            color: #fff;
            font: inherit;
            font-size: 20px;
        }

        .search input::placeholder {
            color: #d0d0d0;
        }

        .app {
            width: 60px;
            height: 60px;
            margin: 0 3px;
            border-radius: 8px;
            box-sizing: border-box;
        }

        .app.active {
            border: 1px solid #363636;
            background: #292929;
        }

        .open::after,
        .active::after {
            content: "";
            position: absolute;
            bottom: 1px;
            width: 9px;
            height: 5px;
            border-radius: 3px;
            background: #9a9a9a;
        }

        .active::after {
            bottom: 0;
            width: 24px;
            background: #4cc2ff;
        }

        .tray {
            display: flex;
            align-items: center;
            margin-left: auto;
        }

        .weather {
            width: 48px;
            height: 60px;
            margin-right: 24px;
        }

        .badge {
            position: absolute;
            top: 3px;
            right: 0;
            width: 24px;
            height: 24px;
            border-radius: 50%;
            background: #ff99a4;
            color: #000;
            font-size: 16px;
        }

        .up {
            width: 48px;
            height: 48px;
            margin-right: 14px;
        }

        .lang {
            width: 38px;
            margin-right: 26px;
        }

        .quick {
            gap: 10px;
            margin-right: 30px;
        }

        .date {
            display: block;
            text-align: right;
            margin-right: 8px;
        }
    `;

    render() {
        return html`
            <button class="start" aria-label="Start">
                <svg width="35" height="35" viewBox="0 0 35 35">
                    <defs><linearGradient id="win" x1="0" y1="0" x2="35" y2="35" gradientUnits="userSpaceOnUse"><stop offset="0" stop-color="#7df1fc"></stop><stop offset="1" stop-color="#0f96f8"></stop></linearGradient></defs>
                    <path d="M1 0h16v17H0V1zM18 0h16l1 1v16H18zM0 18h17v17H1l-1-1zM18 18h17v16l-1 1H18z" fill="url(#win)"></path>
                </svg>
            </button>

            <label class="search">
                <svg width="24" height="24" viewBox="0 0 24 24" fill="none" stroke="#dcdcdc" stroke-width="3" stroke-linecap="round"><circle cx="10" cy="10" r="8"></circle><path d="M16 16l6 6"></path></svg>
                <input aria-label="Search" placeholder="Search">
                <svg width="66" height="40" viewBox="0 0 66 40">
                    <circle cx="31" cy="18" r="17" fill="#fbd583"></circle>
                    <path d="M15 20a17 17 0 0 1 8-17c-3 10-1 22 10 30-10 2-17-4-18-13z" fill="#f6b45b"></path>
                    <g fill="#f0a850"><circle cx="23" cy="14" r="4"></circle><circle cx="38" cy="13" r="3"></circle><circle cx="31" cy="5" r="2"></circle><circle cx="32" cy="25" r="2"></circle></g>
                    <circle cx="22" cy="30" r="4" fill="#e8645a"></circle>
                    <path d="M1 36l2-11 3 6 2-9 3 7 3-4 4 11zM40 34l2-8 3 3 2-7 3 4 2-6 3 7 2-2 2 5 3 1 2 5z" fill="#5360cf"></path>
                    <path d="M0 36c14-6 50-5 65-3-2 5-6 6-12 6H8c-4 0-6-1-8-3z" fill="#59638f"></path>
                    <path d="M0 36c9-4 20-5 32-4-6 2-9 4-8 7H8c-4 0-6-1-8-3z" fill="#c9ced3"></path>
                </svg>
            </label>

            ${apps.map((a) => html`
                <button class="app ${a.active ? "active" : a.open ? "open" : ""}" aria-label=${a.name}>
                    ${a.art ? html`<svg width="36" height="36" viewBox="0 0 36 36">${a.art}</svg>` : copilotIcon(34)}
                </button>
            `)}

            <div class="tray">
                <button class="weather" aria-label="Weather">
                    <svg width="38" height="36" viewBox="0 0 38 36">
                        <circle cx="16" cy="18" r="16" fill="#f39a1d"></circle>
                        <path d="M5 29a16 16 0 0 0 26-6L20 20z" fill="#ef6c16"></path>
                        <path d="M16 28a4 4 0 0 1 1-7 6 6 0 0 1 11 0c5-1 6 7 1 7z" fill="#c6dafc"></path>
                    </svg>
                    <span class="badge">8</span>
                </button>
                <button class="up" aria-label="Hidden icons"><svg width="16" height="9" viewBox="0 0 16 9"><path class="line" d="M1 8l7-7 7 7"></path></svg></button>
                <button class="lang">ENG<br>IN</button>
                <button class="quick" aria-label="Quick settings">
                    <svg width="26" height="20" viewBox="0 0 26 20"><g class="line"><path d="M1 7a17 17 0 0 1 24 0M5 11a11 11 0 0 1 16 0M9 14.500a6 6 0 0 1 8 0"></path></g><circle cx="13" cy="17.500" r="2.300" fill="#fff"></circle></svg>
                    <svg width="24" height="20" viewBox="0 0 24 20"><path class="line" d="M11 2L6 6H1v8h5l5 4zM16 7l6 6M22 7l-6 6"></path></svg>
                    <svg width="30" height="24" viewBox="0 0 30 24"><g class="line"><rect x="1" y="6" width="25" height="15" rx="4"></rect><path d="M29 11v5"></path></g><path d="M4 9h19v9H4z" fill="#fff"></path><path d="M9 4h10v6c0 3-2 4-3.500 4.500V19h-3v-4.500C11 14 9 13 9 10z" fill="#fff" stroke="#1c1c1c"></path><path d="M12 1v4M16 1v4" stroke="#fff" stroke-width="2"></path></svg>
                </button>
                <button class="date">10:30<br>01-02-2026</button>
            </div>
        `;
    }
}

@customElement("app-root")
class AppRoot extends LitElement {
    static styles = css`
        :host {
            display: flex;
            flex-direction: column;
            height: 100vh;
            overflow: hidden;
            background: #3b3b3b;
        }
    `;

    render() {
        return html`
            <browser-bar></browser-bar>
            <city-watch></city-watch>
            <task-bar></task-bar>
        `;
    }
}
